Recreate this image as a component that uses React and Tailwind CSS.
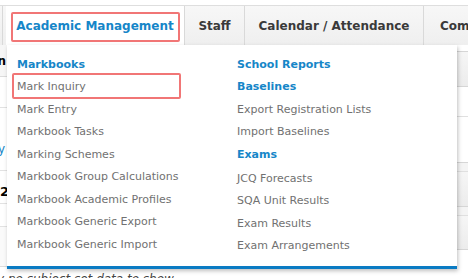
import React from 'react'

const leftLinks = [
  { label: 'Markbooks', heading: true },
  { label: 'Mark Inquiry', marked: true },
  { label: 'Mark Entry' },
  { label: 'Markbook Tasks' },
  { label: 'Marking Schemes' },
  { label: 'Markbook Group Calculations' },
  { label: 'Markbook Academic Profiles' },
  { label: 'Markbook Generic Export' },
  { label: 'Markbook Generic Import' },
]

const rightLinks = [
  { label: 'School Reports', heading: true },
  { label: 'Baselines', heading: true },
  { label: 'Export Registration Lists' },
  { label: 'Import Baselines' },
  { label: 'Exams', heading: true, extra: true },
  { label: 'JCQ Forecasts' },
  { label: 'SQA Unit Results' },
  { label: 'Exam Results' },
  { label: 'Exam Arrangements' },
]

function MenuItem({ item }) {
  return (
    <div
      className={`relative flex items-center h-[22.5px] whitespace-nowrap ${
        item.extra ? 'mb-[1.5px]' : ''
      } ${item.heading ? 'font-bold text-[#1686c8]' : 'text-[#717171]'}`}
    >
      {item.label}
      {item.marked && (
        <span className="absolute left-[-5px] top-[-3px] w-[169px] h-[26px] border-2 border-[#f17676] rounded-[2px]" />
      )}
    </div>
  )
}

function NavTab({ label, width, active }) {
  return (
    <div
      className={`relative flex items-center justify-center shrink-0 whitespace-nowrap font-bold text-[12px] ${width} ${
        active ? 'bg-white text-[#1686c8]' : 'text-[#3a3a3a] border-r border-[#d9d9d9]'
      }`}
    >
      {label}
      {active && (
        <span className="absolute left-[5px] top-[6px] w-[169px] h-[30px] border-2 border-[#f17676] rounded-[2px]" />
      )}
    </div>
  )
}

export default function App() {
  return (
    <div className="relative w-[468px] h-[278px] overflow-hidden bg-white text-[11px] font-['DejaVu_Sans','Verdana',sans-serif]">
      {/* top navigation */}
      <div className="mt-[5px] h-[40px] border-t border-[#dedede] bg-gradient-to-b from-[#f7f7f7] to-[#efefef] flex">
        <div className="w-[3px] shrink-0 border-r border-[#d9d9d9]" />
        <div className="w-[3px] shrink-0" />
        <div className="w-[179px] shrink-0 flex border-r border-[#d9d9d9]">
          <NavTab label="Academic Management" width="w-[178px]" active />
        </div>
        <NavTab label="Staff" width="w-[60px]" />
        <NavTab label="Calendar / Attendance" width="w-[179px]" />
        <div className="flex items-center pl-[16px] font-bold text-[12px] text-[#3a3a3a] whitespace-nowrap">
          Communication
        </div>
      </div>

      {/* page content behind the menu */}
      <div className="flex h-[233px]">
        <div className="w-[230px] flex flex-col">
          <div className="h-[32px] bg-[#f6f6f6] border-b border-[#dcdcdc] flex items-center">
            <div className="w-[6px] flex justify-end overflow-hidden text-[12px] font-bold text-black">
              <span className="shrink-0">Section</span>
            </div>
          </div>
          <div className="h-[31px] border-b border-[#e2e2e2]" />
          <div className="h-[63px] border-b border-[#e2e2e2] flex items-center pt-[20px] text-[#1686c8] text-[12px]">
            <span className="-ml-[2px]">y</span>
          </div>
          <div className="h-[33px] border-b border-[#e2e2e2] flex items-center pt-[10px] text-[13px] font-bold text-black">
            <span>2</span>
          </div>
          <div className="h-[23px] border-b border-[#e2e2e2]" />
          <div className="h-[40px] border-b border-[#dcdcdc] bg-[#fafafa]" />
        </div>
        <div className="flex-1 flex flex-col">
          <div className="h-[7px] border-b border-[#d6d6d6]" />
          <div className="h-[35px] border-b border-[#d6d6d6] bg-gradient-to-b from-[#f6f6f6] to-[#ececec]" />
          <div className="h-[30px] border-b border-[#e0e0e0]" />
          <div className="h-[46px] border-b border-[#d6d6d6]" />
          <div className="h-[9px] border-b border-[#e0e0e0] bg-[#f4f4f4]" />
          <div className="h-[35px] border-b border-[#d6d6d6] bg-gradient-to-b from-[#f6f6f6] to-[#ececec]" />
          <div className="h-[9px] border-b border-[#e0e0e0] bg-[#f4f4f4]" />
          <div className="h-[34px] border-b border-[#d6d6d6] bg-gradient-to-b from-[#f6f6f6] to-[#ececec]" />
        </div>
      </div>
      <div className="-mt-[6px] -ml-[3px] italic text-[12px] text-[#444] whitespace-nowrap leading-[14px]">
        y no subject set data to show
      </div>

      {/* dropdown menu */}
      <div className="absolute left-[7px] top-[45px] w-[450px] h-[224px] bg-white border-b-[3px] border-[#0a7bc3] shadow-[1px_2px_4px_rgba(0,0,0,0.25)] flex pt-[8.5px]">
        <div className="w-[220px] pl-[10px] flex flex-col">
          {leftLinks.map((item) => (
            <MenuItem key={item.label} item={item} />
          ))}
        </div>
        <div className="flex-1 pl-[10px] flex flex-col">
          {rightLinks.map((item) => (
            <MenuItem key={item.label} item={item} />
          ))}
        </div>
      </div>
    </div>
  )
}
